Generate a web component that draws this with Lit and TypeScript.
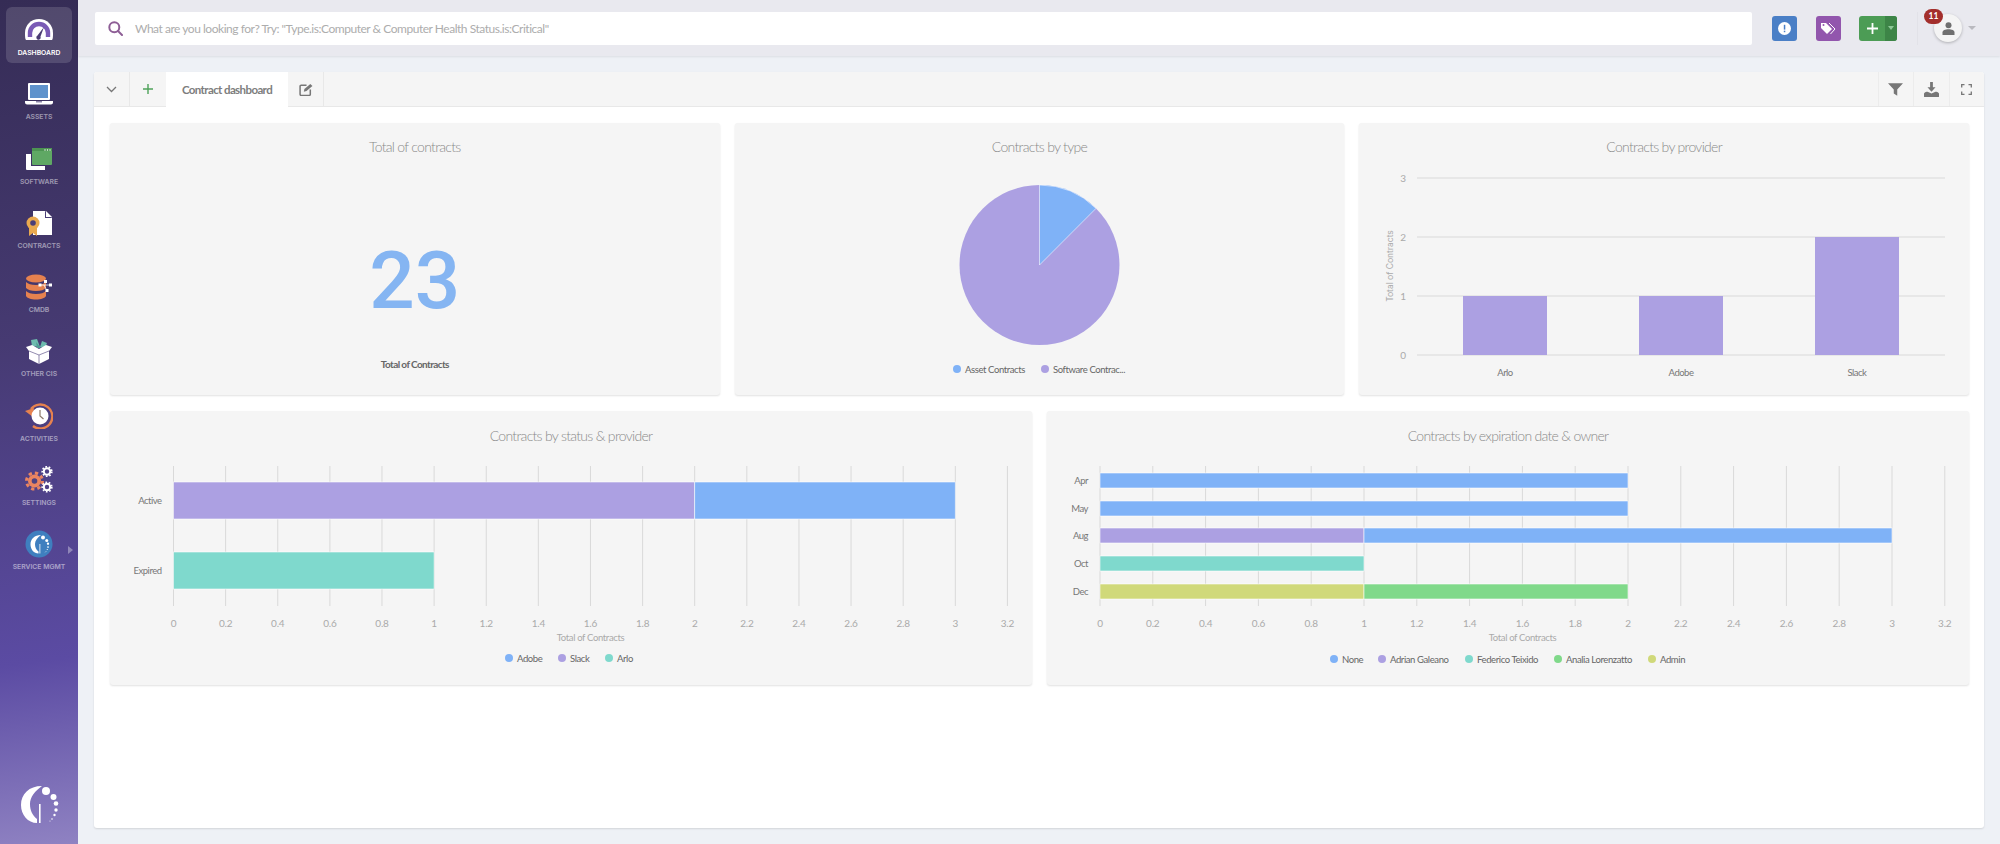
import { LitElement, html, svg, css } from 'lit';
import { customElement } from 'lit/decorators.js';

const BLUE = '#7fb2f7';
const PURPLE = '#aca0e2';
const TEAL = '#7fd9cd';
const GREEN = '#80d98a';
const YELLOW = '#d0d97a';

const TICKS = ['0', '0.2', '0.4', '0.6', '0.8', '1', '1.2', '1.4', '1.6', '1.8', '2', '2.2', '2.4', '2.6', '2.8', '3', '3.2'];

type Segment = { from: number; to: number; color: string };
type HRow = { label: string; top: number; height: number; segments: Segment[] };
type LegendItem = { x: number; label: string; color: string };

const logoShape = (fill: string) => svg`
  <path fill=${fill} d="M23 1C10 1 2 9 2 20c0 10 7 18 16 18v-4c-5-4-7-9-7-15C11 12 16 6 23 1z" />
  <rect x="20" y="19" width="1.6" height="19" fill=${fill} />
  <circle cx="27" cy="6" r="4" fill=${fill} /><circle cx="34.5" cy="12" r="3" fill=${fill} />
  <circle cx="37" cy="18.5" r="2.3" fill=${fill} /><circle cx="37" cy="25" r="1.7" fill=${fill} />
  <circle cx="35.5" cy="30" r="1.2" fill=${fill} /><circle cx="33" cy="34" r=".8" fill=${fill} />
  <circle cx="31" cy="36" r=".5" fill=${fill} />`;

const ICONS: Record<string, unknown> = {
  dashboard: html`<svg width="28" height="24" viewBox="0 0 28 24">
    <path fill="#fff" d="M1 22c-1-1-1-4-1-7C0 7 6 1 14 1s14 6 14 14c0 3 0 6-1 7z" />
    <path fill="none" stroke="#7a5bb5" stroke-width="4.4" d="M5 19v-4C5 10 9 6 14 6s9 4 9 9v4" />
    <path fill="#4b3d73" d="M19 9l-3.5 9.500a2.200 2.200 0 1 1-3-1z" />
  </svg>`,
  assets: html`<svg width="28" height="24" viewBox="0 0 28 24">
    <rect x="3" y="1" width="22" height="17" rx="1" fill="#fff" />
    <rect x="5" y="3" width="18" height="13" fill="#5f93cc" />
    <path fill="#fff" d="M0 19h28v1.500c0 1-1 2-2 2H2c-1 0-2-1-2-2z" />
    <rect x="11" y="19" width="6" height="1.500" fill="#8d86a8" />
  </svg>`,
  software: html`<svg width="28" height="24" viewBox="0 0 28 24">
    <path fill="#fff" d="M1 7h5v12h14v4H2a1 1 0 0 1-1-1z" />
    <rect x="7" y="1" width="20" height="17" rx="1" fill="#5fa864" />
    <rect x="7" y="1" width="20" height="3" fill="#4d9452" />
    <circle cx="20" cy="3" r=".7" fill="#fff" /><circle cx="22.500" cy="3" r=".7" fill="#fff" /><circle cx="25" cy="3" r=".7" fill="#fff" />
  </svg>`,
  contracts: html`<svg width="28" height="26" viewBox="0 0 28 26">
    <path fill="#fff" d="M8 1h12l7 7v17H8z" />
    <path fill="#4a3e78" d="M20 1v7h7" />
    <path fill="#fff" d="M21 1l6 6h-6z" />
    <circle cx="8" cy="13" r="6.500" fill="#e9a94f" />
    <circle cx="8" cy="13" r="2.800" fill="#4a3e78" />
    <path fill="#e9a94f" d="M4 18h8v8l-4-3-4 3z" />
  </svg>`,
  cmdb: html`<svg width="28" height="26" viewBox="0 0 28 26">
    <ellipse cx="11" cy="4.500" rx="10" ry="4" fill="#e6824f" />
    <path fill="#e6824f" d="M1 8c2 2 5 3 10 3s8-1 10-3v6c-2 2-5 3-10 3S3 16 1 14z" />
    <path fill="#e6824f" d="M1 17c2 2 5 3 10 3s8-1 10-3v5c-1 2-5 3.500-10 3.500S2 24 1 22z" />
    <path stroke="#fff" stroke-width=".8" d="M15 11h10M19 11l3 6" />
    <rect x="13.500" y="9.500" width="3" height="3" fill="#fff" /><rect x="19" y="6" width="3" height="3" fill="#fff" />
    <rect x="24" y="9.500" width="3" height="3" fill="#fff" /><rect x="20.500" y="15" width="3" height="3" fill="#fff" />
  </svg>`,
  other: html`<svg width="26" height="27" viewBox="0 0 26 27">
    <path fill="#6dbbae" d="M6 8L5 2l6-1 3 8zM14 9l2-6 5 2-2 5z" />
    <path fill="#4f9d92" d="M10 4l5 6h-4z" />
    <path fill="#fff" d="M0 9l6-2 7 4 7-4 6 2-3 4v8l-10 5-10-5v-8z" />
    <path fill="none" stroke="#4a3e78" stroke-width=".6" d="M3 13l10 4 10-4M13 17v9" />
  </svg>`,
  activities: html`<svg width="28" height="26" viewBox="0 0 28 26">
    <path fill="none" stroke="#e6824f" stroke-width="2.400" d="M6 6a12 12 0 1 1 2 17" />
    <path fill="#e6824f" d="M0 8l9-3-1 9z" />
    <circle cx="15" cy="13" r="8.500" fill="#fff" />
    <path fill="none" stroke="#8d7a6a" stroke-width="1.200" d="M15 7v6l3.500 3" />
  </svg>`,
  settings: html`<svg width="28" height="28" viewBox="0 0 28 28">
    <circle cx="9.500" cy="15" r="6.500" fill="#ea8560" />
    <circle cx="9.500" cy="15" r="8" fill="none" stroke="#ea8560" stroke-width="3" stroke-dasharray="3.300 3" />
    <circle cx="9.500" cy="15" r="2.800" fill="#4f4380" />
    <circle cx="22" cy="5.500" r="3.200" fill="none" stroke="#fff" stroke-width="2" />
    <circle cx="22" cy="5.500" r="4.800" fill="none" stroke="#fff" stroke-width="1.600" stroke-dasharray="1.700 1.700" />
    <circle cx="22" cy="21" r="3.200" fill="none" stroke="#fff" stroke-width="2" />
    <circle cx="22" cy="21" r="4.800" fill="none" stroke="#fff" stroke-width="1.600" stroke-dasharray="1.700 1.700" />
  </svg>`,
  service: html`<svg width="28" height="28" viewBox="0 0 28 28">
    <circle cx="14" cy="14" r="13.500" fill="#3f7fbf" />
    <g transform="translate(4.500 4.500) scale(.5)">${logoShape('#fff')}</g>
  </svg>`,
};

const NAV = [
  { key: 'dashboard', label: 'DASHBOARD' },
  { key: 'assets', label: 'ASSETS' },
  { key: 'software', label: 'SOFTWARE' },
  { key: 'contracts', label: 'CONTRACTS' },
  { key: 'cmdb', label: 'CMDB' },
  { key: 'other', label: 'OTHER CIS' },
  { key: 'activities', label: 'ACTIVITIES' },
  { key: 'settings', label: 'SETTINGS' },
  { key: 'service', label: 'SERVICE MGMT' },
];

const STATUS_ROWS: HRow[] = [
  { label: 'Active', top: 26, height: 37, segments: [{ from: 0, to: 2, color: PURPLE }, { from: 2, to: 3, color: BLUE }] },
  { label: 'Expired', top: 96, height: 37, segments: [{ from: 0, to: 1, color: TEAL }] },
];
const STATUS_LEGEND: LegendItem[] = [
  { x: 399, label: 'Adobe', color: BLUE },
  { x: 452, label: 'Slack', color: PURPLE },
  { x: 499, label: 'Arlo', color: TEAL },
];

const OWNER_ROWS: HRow[] = [
  { label: 'Apr', top: 17, height: 15, segments: [{ from: 0, to: 2, color: BLUE }] },
  { label: 'May', top: 45, height: 15, segments: [{ from: 0, to: 2, color: BLUE }] },
  { label: 'Aug', top: 72, height: 15, segments: [{ from: 0, to: 1, color: PURPLE }, { from: 1, to: 3, color: BLUE }] },
  { label: 'Oct', top: 100, height: 15, segments: [{ from: 0, to: 1, color: TEAL }] },
  { label: 'Dec', top: 128, height: 15, segments: [{ from: 0, to: 1, color: YELLOW }, { from: 1, to: 2, color: GREEN }] },
];
const OWNER_LEGEND: LegendItem[] = [
  { x: 287, label: 'None', color: BLUE },
  { x: 335, label: 'Adrian Galeano', color: PURPLE },
  { x: 422, label: 'Federico Teixido', color: TEAL },
  { x: 511, label: 'Analia Lorenzatto', color: GREEN },
  { x: 605, label: 'Admin', color: YELLOW },
];

const legend = (items: LegendItem[], y: number) =>
  items.map(
    (i) => svg`<circle cx=${i.x} cy=${y} r="4" fill=${i.color} />
      <text class="legend" x=${i.x + 8} y=${y + 3.5}>${i.label}</text>`,
  );

@customElement('app-root')
export class AppRoot extends LitElement {
  static styles = css`
    :host {
      display: flex;
      height: 844px;
      background: #eef1f6;
      font-family: 'Lato', sans-serif;
      overflow: hidden;
    }

    .sidebar {
      width: 78px;
      flex: none;
      display: flex;
      flex-direction: column;
      background: linear-gradient(172deg, #352c55 0%, #463a72 40%, #5b4ba3 78%, #8f82c2 100%);
    }
    .nav-item {
      position: relative;
      height: 56px;
      margin: 7px 6px 1.25px;
      padding-top: 9px;
      box-sizing: border-box;
      border-radius: 6px;
      display: flex;
      flex-direction: column;
      align-items: center;
    }
    .nav-item.active {
      background: rgba(255, 255, 255, 0.14);
    }
    .nav-icon {
      height: 28px;
      display: flex;
      align-items: center;
      justify-content: center;
    }
    .nav-label {
      margin-top: 4px;
      font-family: 'Inter', sans-serif;
      font-size: 6.800px;
      line-height: 10px;
      font-weight: 600;
      white-space: nowrap;
      color: rgba(255, 255, 255, 0.5);
    }
    .nav-item.active .nav-label {
      color: #fff;
    }
    .nav-caret {
      position: absolute;
      right: -1px;
      top: 25px;
      border-left: 5px solid rgba(255, 255, 255, 0.35);
      border-top: 4px solid transparent;
      border-bottom: 4px solid transparent;
    }
    .logo {
      margin-top: auto;
      margin-bottom: 19px;
      align-self: center;
      display: block;
    }

    .main {
      flex: 1;
      min-width: 0;
      display: flex;
      flex-direction: column;
    }
    .topbar {
      height: 56px;
      flex: none;
      box-sizing: border-box;
      display: flex;
      align-items: center;
      padding-left: 17px;
      background: #e9e9ef;
      box-shadow: 0 1px 2px rgba(0, 0, 0, 0.08);
    }
    .search {
      flex: 1;
      height: 33px;
      display: flex;
      align-items: center;
      gap: 12px;
      padding-left: 13px;
      background: #fff;
      border-radius: 2px;
      font-size: 12px;
      letter-spacing: -0.47px;
      color: #adadad;
    }
    .actions {
      display: flex;
      align-items: center;
      margin-left: 20px;
      width: 228px;
      flex: none;
    }
    .btn {
      width: 25px;
      height: 25px;
      border-radius: 3px;
      display: flex;
      align-items: center;
      justify-content: center;
    }
    .btn.blue {
      background: #4a7fc6;
    }
    .btn.violet {
      background: #9256ad;
      margin-left: 19px;
    }
    .split {
      margin-left: 18px;
      width: 38px;
      height: 25px;
      border-radius: 3px;
      overflow: hidden;
      display: flex;
      background: #4c9c55;
    }
    .split-main {
      flex: 1;
      display: flex;
      align-items: center;
      justify-content: center;
    }
    .split-side {
      width: 12px;
      background: #3d8547;
      display: flex;
      align-items: center;
      justify-content: center;
    }
    .split-caret {
      border-top: 4px solid #8cc896;
      border-left: 3.500px solid transparent;
      border-right: 3.500px solid transparent;
    }
    .divider {
      width: 1px;
      height: 33px;
      margin-left: 20px;
      background: #e2e2e8;
    }
    .avatar {
      position: relative;
      width: 28px;
      height: 28px;
      margin-left: 16px;
      border-radius: 50%;
      background: #f4f4f4;
      box-shadow: 0 1px 3px rgba(0, 0, 0, 0.25);
      display: flex;
      align-items: center;
      justify-content: center;
    }
    .badge {
      position: absolute;
      left: -10px;
      top: -5px;
      width: 19px;
      height: 15px;
      border-radius: 8px;
      background: #a32f2c;
      color: #fff;
      font-size: 8.500px;
      font-weight: 700;
      line-height: 15px;
      text-align: center;
    }
    .user-caret {
      margin-left: 6px;
      border-top: 4px solid #b9b9bf;
      border-left: 4px solid transparent;
      border-right: 4px solid transparent;
    }

    .panel {
      flex: 1;
      margin: 16px;
      min-height: 0;
      background: #fff;
      border-radius: 3px;
      box-shadow: 0 1px 2px rgba(0, 0, 0, 0.12);
      display: flex;
      flex-direction: column;
    }
    .tabs {
      height: 35px;
      flex: none;
      box-sizing: border-box;
      display: flex;
      background: #f5f5f5;
      border-bottom: 1px solid #e8e8e8;
      border-radius: 3px 3px 0 0;
    }
    .tab-btn {
      width: 36px;
      box-sizing: border-box;
      border-right: 1px solid #e8e8e8;
      display: flex;
      align-items: center;
      justify-content: center;
    }
    .tab-btn.plain {
      border-right: none;
    }
    .tab-active {
      width: 122px;
      height: 35px;
      background: #fff;
      display: flex;
      align-items: center;
      justify-content: center;
      font-size: 11.500px;
      font-weight: 700;
      letter-spacing: -0.6px;
      color: #7d7d7d;
    }
    .tools {
      margin-left: auto;
      display: flex;
    }
    .tool {
      width: 35.500px;
      box-sizing: border-box;
      border-left: 1px solid #ececec;
      display: flex;
      align-items: center;
      justify-content: center;
    }

    .content {
      padding: 16px 15px 16px 16px;
      display: flex;
      flex-direction: column;
      gap: 16px;
    }
    .row {
      display: grid;
      gap: 15px;
    }
    .row.three {
      grid-template-columns: repeat(3, 1fr);
      height: 272px;
    }
    .row.two {
      grid-template-columns: repeat(2, 1fr);
      height: 274px;
    }
    .card {
      background: #f5f5f5;
      border-radius: 3px;
      box-shadow: 0 1px 2px rgba(0, 0, 0, 0.12);
      display: flex;
      flex-direction: column;
      align-items: center;
      overflow: hidden;
    }
    .card-title {
      height: 44px;
      flex: none;
      box-sizing: border-box;
      padding-top: 15px;
      font-size: 14px;
      line-height: 18px;
      font-weight: 300;
      letter-spacing: -0.7px;
      color: #8a8a8a;
    }
    .row.two .card-title {
      height: 45px;
      padding-top: 16px;
    }
    .card svg.chart {
      display: block;
      width: 100%;
      flex: 1;
    }
    .big-number {
      margin-top: 74px;
      font-family: 'Roboto', sans-serif;
      font-size: 80px;
      line-height: 80px;
      font-weight: 500;
      color: #85b5f2;
    }
    .big-label {
      margin-top: 36px;
      font-size: 10px;
      line-height: 14px;
      font-weight: 700;
      letter-spacing: -0.6px;
      color: #666;
    }

    text {
      font-family: 'Lato', sans-serif;
    }
    .tick {
      font-size: 10px;
      letter-spacing: -0.2px;
      fill: #aaa;
      text-anchor: middle;
    }
    .cat {
      font-size: 9.500px;
      letter-spacing: -0.5px;
      fill: #777;
    }
    .axis {
      font-size: 9.500px;
      letter-spacing: -0.35px;
      fill: #aaa;
      text-anchor: middle;
    }
    .axis-y {
      font-family: 'Inter', sans-serif;
      font-size: 8.500px;
      letter-spacing: 0;
    }
    .legend {
      font-size: 9.500px;
      letter-spacing: -0.4px;
      fill: #666;
    }
    .grid {
      stroke: #d9d9d9;
      stroke-width: 1;
    }
  `;

  private hbarChart(x0: number, unit: number, axisX: number, legendY: number, rows: HRow[], items: LegendItem[]) {
    return html`<svg class="chart" viewBox="0 0 922 229">
      ${TICKS.map((t) => {
        const x = x0 + parseFloat(t) * unit;
        return svg`<line class="grid" x1=${x} x2=${x} y1="10" y2="150" />
          <text class="tick" x=${x} y="170.500">${t}</text>`;
      })}
      ${rows.map(
        (r) => svg`
          <text class="cat" text-anchor="end" x=${x0 - 12} y=${r.top + r.height / 2 + 3.5}>${r.label}</text>
          ${r.segments.map(
            (s) => svg`<rect x=${x0 + s.from * unit} y=${r.top} width=${(s.to - s.from) * unit} height=${r.height}
              fill=${s.color} stroke="#fff" stroke-opacity=".7" stroke-width=".8" />`,
          )}`,
      )}
      <text class="axis" x=${axisX} y="184.500">Total of Contracts</text>
      ${legend(items, legendY)}
    </svg>`;
  }

  private pieChart() {
    return html`<svg class="chart" viewBox="0 0 609.67 228">
      <circle cx="304.500" cy="98" r="80" fill=${PURPLE} />
      <path d="M304.500 98V18A80 80 0 0 1 361 41.400z" fill=${BLUE} stroke="#fff" stroke-opacity=".7" stroke-width=".8" />
      ${legend(
        [
          { x: 222, label: 'Asset Contracts', color: BLUE },
          { x: 310, label: 'Software Contrac...', color: PURPLE },
        ],
        202,
      )}
    </svg>`;
  }

  private columnChart() {
    const bars = [
      { label: 'Arlo', x: 104, value: 1 },
      { label: 'Adobe', x: 280, value: 1 },
      { label: 'Slack', x: 456, value: 2 },
    ];
    return html`<svg class="chart" viewBox="0 0 609.67 228">
      ${[3, 2, 1, 0].map((v) => {
        const y = 188 - v * 59;
        return svg`<line class="grid" x1="58" x2="586" y1=${y} y2=${y} />
          <text class="tick" x="44" y=${y + 3.5}>${v}</text>`;
      })}
      <text class="axis axis-y" transform="translate(34 99) rotate(-90)">Total of Contracts</text>
      ${bars.map(
        (b) => svg`<rect x=${b.x} y=${188 - b.value * 59} width="84" height=${b.value * 59} fill=${PURPLE} />
          <text class="cat" text-anchor="middle" x=${b.x + 42} y="209">${b.label}</text>`,
      )}
    </svg>`;
  }

  render() {
    return html`
      <nav class="sidebar">
        ${NAV.map(
          (n, i) => html`<div class="nav-item ${i === 0 ? 'active' : ''}">
            <div class="nav-icon">${ICONS[n.key]}</div>
            <div class="nav-label">${n.label}</div>
            ${n.key === 'service' ? html`<span class="nav-caret"></span>` : ''}
          </div>`,
        )}
        <svg class="logo" width="40" height="40" viewBox="0 0 40 40">${logoShape('#fff')}</svg>
      </nav>

      <div class="main">
        <header class="topbar">
          <div class="search">
            <svg width="15" height="15" viewBox="0 0 15 15" fill="none" stroke="#8e5e96" stroke-width="2">
              <circle cx="6.300" cy="6.300" r="5" /><path d="M10 10l4 4" stroke-linecap="round" />
            </svg>
            <span>What are you looking for? Try: "Type.is:Computer &amp; Computer Health Status.is:Critical"</span>
          </div>
          <div class="actions">
            <div class="btn blue">
              <svg width="13" height="13" viewBox="0 0 13 13">
                <circle cx="6.500" cy="6.500" r="6.500" fill="#fff" />
                <rect x="5.800" y="2.800" width="1.500" height="4.800" fill="#4a7fc6" />
                <rect x="5.800" y="8.700" width="1.500" height="1.500" fill="#4a7fc6" />
              </svg>
            </div>
            <div class="btn violet">
              <svg width="15" height="13" viewBox="0 0 15 13">
                <path fill="#fff" d="M0 1v5l6 6 5-5-6-6z" />
                <path fill="none" stroke="#fff" stroke-width="1" d="M8 1l6 6-4.500 5" />
                <circle cx="2.500" cy="3" r="1" fill="#9256ad" />
              </svg>
            </div>
            <div class="split">
              <div class="split-main">
                <svg width="11" height="11" viewBox="0 0 11 11"><path stroke="#fff" stroke-width="1.800" d="M5.500 0v11M0 5.500h11" /></svg>
              </div>
              <div class="split-side"><span class="split-caret"></span></div>
            </div>
            <div class="divider"></div>
            <div class="avatar">
              <svg width="13" height="13" viewBox="0 0 13 13" fill="#6f6f6f">
                <circle cx="6.500" cy="3.300" r="3" /><path d="M.5 13v-2.500C.5 8.500 3 7.300 6.500 7.300s6 1.200 6 3.200V13z" />
              </svg>
              <span class="badge">11</span>
            </div>
            <span class="user-caret"></span>
          </div>
        </header>

        <section class="panel">
          <div class="tabs">
            <div class="tab-btn">
              <svg width="11" height="7" viewBox="0 0 11 7" fill="none" stroke="#777" stroke-width="1.300"><path d="M1 1l4.500 4.500L10 1" /></svg>
            </div>
            <div class="tab-btn plain">
              <svg width="10" height="10" viewBox="0 0 10 10"><path stroke="#4fa35a" stroke-width="1.400" d="M5 0v10M0 5h10" /></svg>
            </div>
            <div class="tab-active">Contract dashboard</div>
            <div class="tab-btn">
              <svg width="14" height="13" viewBox="0 0 13 12" fill="none" stroke="#777" stroke-width="1.400">
                <path d="M7 2H2a1 1 0 0 0-1 1v7.500a1 1 0 0 0 1 1h7.500a1 1 0 0 0 1-1V6" />
                <path d="M4.500 8l.5-2.500L10.500.8l2 2L7 7.500z" fill="#777" stroke="none" />
              </svg>
            </div>
            <div class="tools">
              <div class="tool">
                <svg width="15" height="13" viewBox="0 0 13 11"><path fill="#777" d="M0 0h13L8 5.500V11L5 9V5.500z" /></svg>
              </div>
              <div class="tool">
                <svg width="15" height="15" viewBox="0 0 13 13" fill="#777">
                  <path d="M5.300 0h2.400v4.500h2.300L6.500 8.500 3 4.500h2.300z" />
                  <path d="M0 10c1-1.500 2-1.500 3-1.500l3.500 1.500 3.500-1.500c1 0 2 0 3 1.500v2.500a.5.5 0 0 1-.5.5H.5a.5.5 0 0 1-.5-.5z" />
                </svg>
              </div>
              <div class="tool">
                <svg width="11" height="11" viewBox="0 0 11 11" fill="none" stroke="#777" stroke-width="1.300">
                  <path d="M.7 3.500V.7h2.800M7.500.7h2.800v2.800M10.300 7.500v2.800H7.500M3.500 10.300H.7V7.500" />
                </svg>
              </div>
            </div>
          </div>

          <div class="content">
            <div class="row three">
              <div class="card">
                <div class="card-title">Total of contracts</div>
                <div class="big-number">23</div>
                <div class="big-label">Total of Contracts</div>
              </div>
              <div class="card">
                <div class="card-title">Contracts by type</div>
                ${this.pieChart()}
              </div>
              <div class="card">
                <div class="card-title">Contracts by provider</div>
                ${this.columnChart()}
              </div>
            </div>
            <div class="row two">
              <div class="card">
                <div class="card-title">Contracts by status &amp; provider</div>
                ${this.hbarChart(63.5, 260.6, 480.5, 202, STATUS_ROWS, STATUS_LEGEND)}
              </div>
              <div class="card">
                <div class="card-title">Contracts by expiration date &amp; owner</div>
                ${this.hbarChart(53, 264, 475.5, 203, OWNER_ROWS, OWNER_LEGEND)}
              </div>
            </div>
          </div>
        </section>
      </div>
    `;
  }
}
